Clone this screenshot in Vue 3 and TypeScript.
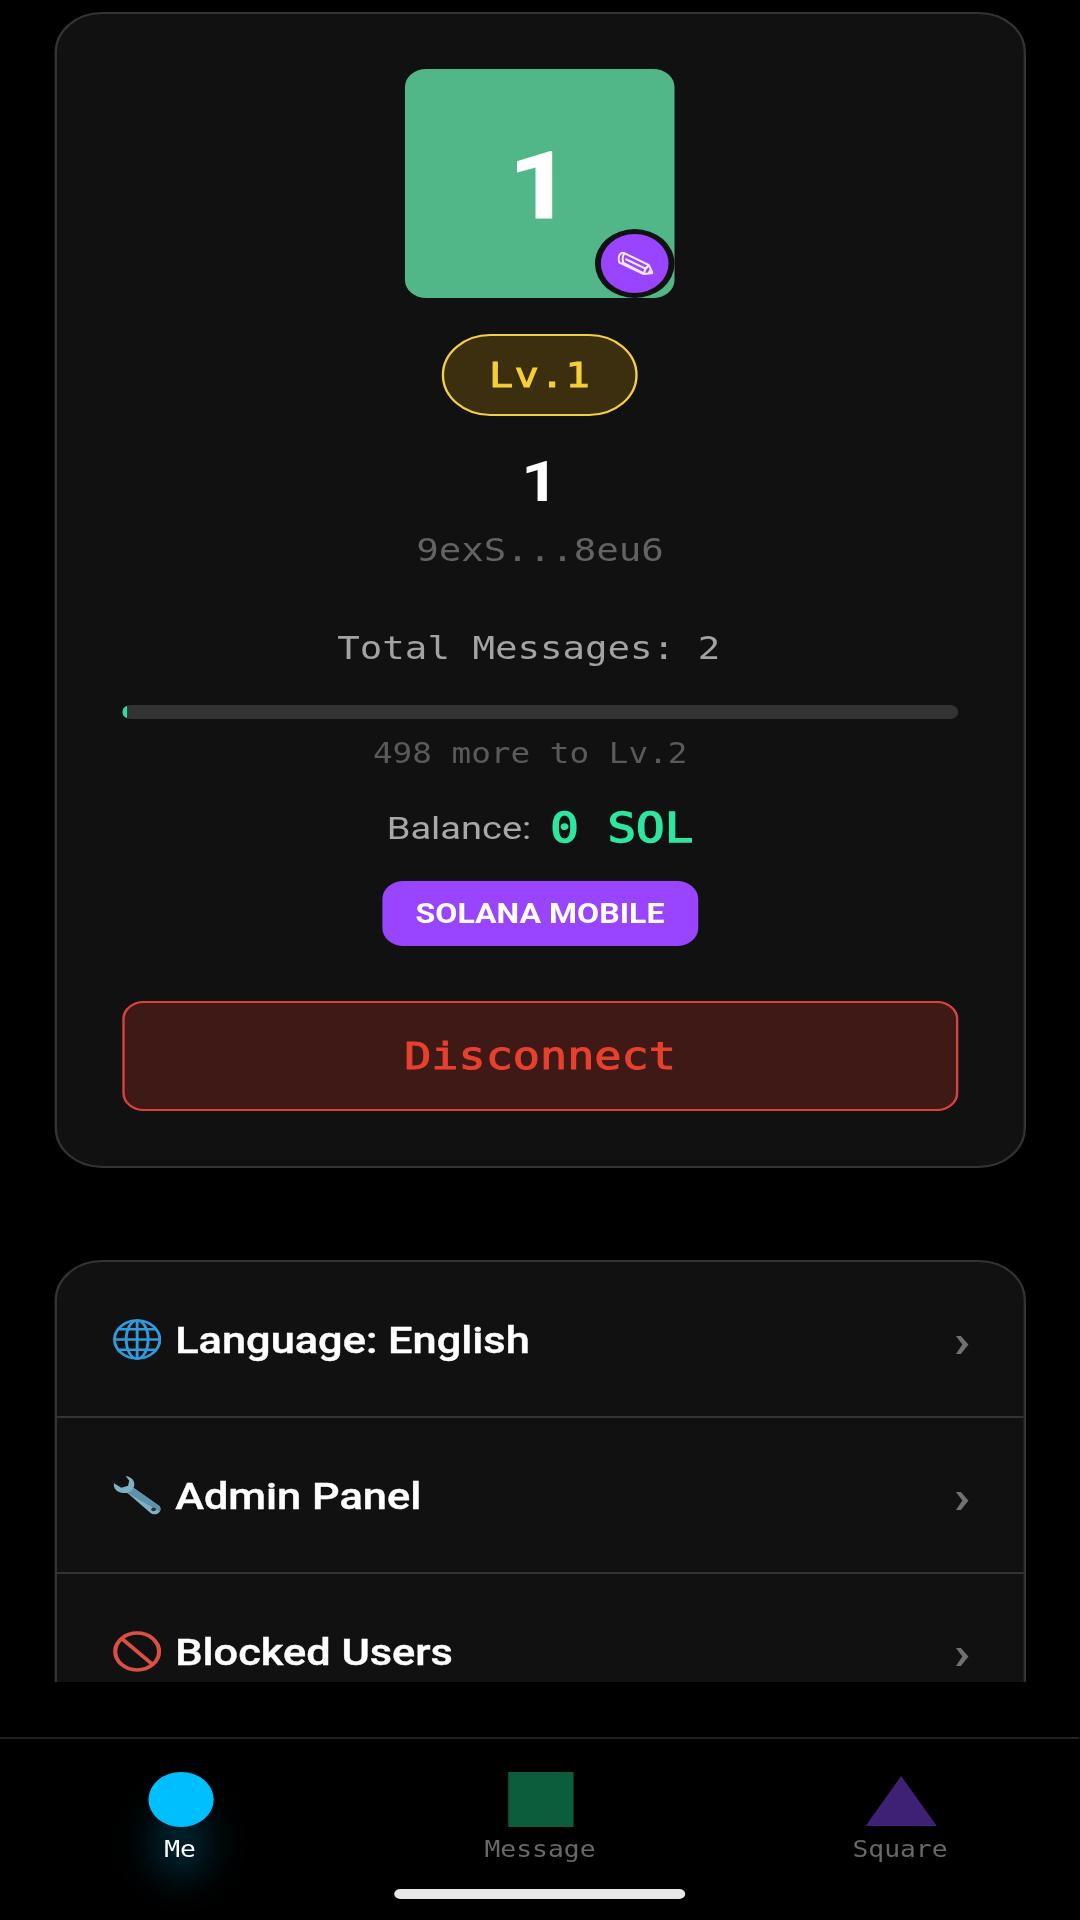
<script setup lang="ts">
interface MenuRow {
  label: string
  icon: 'globe' | 'wrench' | 'blocked'
}

interface Tab {
  label: string
  shape: 'circle' | 'square' | 'triangle'
  active?: boolean
}

const menuRows: MenuRow[] = [
  { label: 'Language: English', icon: 'globe' },
  { label: 'Admin Panel', icon: 'wrench' },
  { label: 'Blocked Users', icon: 'blocked' },
]

const tabs: Tab[] = [
  { label: 'Me', shape: 'circle', active: true },
  { label: 'Message', shape: 'square' },
  { label: 'Square', shape: 'triangle' },
]

const progress = 0.6
</script>

<template>
  <div class="screen">
    <main class="scroller">
      <section class="card profile">
        <div class="avatar">
          <span class="avatar-letter">1</span>
          <span class="edit-badge">
            <svg class="pencil" viewBox="0 0 36 23" preserveAspectRatio="none">
              <path d="M6.5 1 31.5 13 35.5 21 26.5 22 2 10.5C0.5 8 1 4 2.5 2.5 3.5 1 5 .5 6.5 1Z" fill="none" stroke="#f3e9ff" stroke-width="2" stroke-linejoin="round" />
              <path d="M7 1.5C5 4 4.5 7 6 11M8 7 28 16.5M6 11 26.5 21.5M31.5 13C29 15.5 27 18.5 26.5 22" fill="none" stroke="#f3e9ff" stroke-width="2" />
              <path d="M32 17.5 35.5 21 30.5 21.5Z" fill="#f3e9ff" />
            </svg>
          </span>
        </div>

        <div class="level-pill">Lv.1</div>
        <div class="name">1</div>
        <div class="address">9exS...8eu6</div>
        <div class="total">Total Messages: 2&nbsp;</div>

        <div class="progress-track">
          <div class="progress-fill" :style="{ width: `${progress}%` }"></div>
        </div>
        <div class="progress-note">498 more to Lv.2&nbsp;</div>

        <div class="balance">
          <span class="balance-label">Balance:</span>
          <span class="balance-value">0 SOL</span>
        </div>

        <div class="solana-chip">SOLANA MOBILE</div>
        <button class="disconnect" type="button">Disconnect</button>
      </section>

      <section class="card menu">
        <div v-for="row in menuRows" :key="row.label" class="menu-row">
          <svg v-if="row.icon === 'globe'" class="menu-icon" viewBox="0 0 40 40">
            <g fill="none" stroke="#2f9bdc" stroke-width="2.4">
              <circle cx="20" cy="20" r="18.6" />
              <ellipse cx="20" cy="20" rx="9" ry="18.6" />
              <path d="M20 1.4V38.6M1.4 20H38.6M4.5 10H35.5M4.5 30H35.5" />
            </g>
          </svg>
          <svg v-else-if="row.icon === 'wrench'" class="menu-icon" viewBox="0 0 40 40">
            <path d="M10.5 1C14 1.5 17 4 17.5 7.5 18 9.5 17.5 11 17 12.5L38 30C40 32 39.5 35.500 37.500 37 35.500 39 32.500 38.500 31 37L12 17.500C9 18 5.500 17.500 3 15 1 13 .5 10 1 8L7 12.500 12.500 10.500 13.500 5.500Z" fill="#7fb0c4" />
            <path d="M17 12.500 38 30C39 31.500 39.500 33.500 38.500 35.500L12 17.500C14.500 16.500 16 15 17 12.500Z" fill="#5d93aa" />
            <circle cx="33.500" cy="33.500" r="1.900" fill="#23343c" />
          </svg>
          <svg v-else class="menu-icon" viewBox="0 0 40 40">
            <circle cx="20" cy="20" r="18" fill="none" stroke="#dc4f43" stroke-width="3.400" />
            <path d="M7.300 7.300 32.700 32.700" stroke="#dc4f43" stroke-width="3.400" />
          </svg>
          <span class="menu-label">{{ row.label }}</span>
          <span class="chevron">›</span>
        </div>
      </section>
    </main>

    <nav class="tabbar">
      <div v-for="tab in tabs" :key="tab.label" class="tab" :class="{ active: tab.active }">
        <span class="tab-shape" :class="tab.shape"></span>
        <span class="tab-label">{{ tab.label }}</span>
      </div>
    </nav>
    <div class="home-bar-wrap"><div class="home-bar"></div></div>
  </div>
</template>

<style scoped>
.screen {
  /* the capture is a 1080x2280 phone squeezed to 1920 high, so everything is laid out narrow and widened */
  width: calc(1080px / 1.1875);
  height: 1920px;
  transform: scaleX(1.1875);
  transform-origin: left top;
  background: #000;
  color: #fff;
  overflow: hidden;
  display: flex;
  flex-direction: column;
  font-family: Roboto, "Noto Sans", sans-serif;
}

.scroller {
  height: 1682px;
  flex: none;
  overflow: hidden;
  padding: 12px 45.5px 0;
  box-sizing: border-box;
}

.card {
  background: #111;
  border: 2px solid #333;
  border-radius: 40px;
  box-sizing: border-box;
}

.profile {
  height: 1156px;
  padding: 55px 55px 0;
  display: flex;
  flex-direction: column;
  align-items: center;
}

.avatar {
  position: relative;
  width: 227px;
  height: 229px;
  flex: none;
  border-radius: 18px;
  background: #52b788;
  display: flex;
  align-items: center;
  justify-content: center;
}

.avatar-letter {
  font-size: 92px;
  font-weight: 700;
  line-height: 1;
  padding-top: 7px;
  -webkit-text-stroke: 1px #fff;
}

.edit-badge {
  position: absolute;
  right: 0;
  bottom: 0;
  width: 67px;
  height: 69px;
  box-sizing: border-box;
  border: 5.5px solid #111;
  border-radius: 50%;
  background: #9945ff;
  display: flex;
  align-items: center;
  justify-content: center;
}

.pencil {
  width: 30px;
  height: 23px;
}

.level-pill {
  margin-top: 36px;
  width: 165px;
  height: 82px;
  flex: none;
  box-sizing: border-box;
  border: 2.5px solid #f3cf45;
  border-radius: 41px;
  background: #3b2f10;
  color: #f5cf36;
  font-family: "DejaVu Sans Mono", "Liberation Mono", monospace;
  font-size: 34px;
  font-weight: 400;
  letter-spacing: 1px;
  -webkit-text-stroke: 1px #f5cf36;
  display: flex;
  align-items: center;
  justify-content: center;
}

.name {
  margin-top: 36px;
  font-size: 55px;
  font-weight: 700;
  line-height: 60px;
}

.address,
.total,
.progress-note {
  font-family: "DejaVu Sans Mono", "Liberation Mono", monospace;
}

.address {
  margin-top: 20px;
  font-size: 31.5px;
  line-height: 36px;
  color: #636363;
}

.total {
  margin-top: 62px;
  font-size: 31.5px;
  line-height: 36px;
  color: #a3a3a3;
}

.progress-track {
  margin-top: 39px;
  width: 100%;
  height: 14px;
  flex: none;
  border-radius: 7px;
  background: #333;
  overflow: hidden;
}

.progress-fill {
  height: 100%;
  background: #2ed8a0;
  border-radius: 7px;
}

.progress-note {
  margin-top: 17.5px;
  font-size: 27.5px;
  line-height: 32px;
  color: #5a5a5a;
}

.balance {
  margin-top: 34px;
  display: flex;
  align-items: center;
  gap: 16px;
  height: 50px;
}

.balance-label {
  font-size: 32px;
  color: #a8a8a8;
}

.balance-value {
  font-family: "DejaVu Sans Mono", "Liberation Mono", monospace;
  font-size: 40px;
  font-weight: 400;
  -webkit-text-stroke: 1.4px #2ee69e;
  color: #2ee69e;
}

.solana-chip {
  margin-top: 28px;
  width: 266px;
  height: 65px;
  padding-top: 2px;
  box-sizing: border-box;
  flex: none;
  border-radius: 18px;
  background: #9945ff;
  font-size: 27px;
  font-weight: 700;
  display: flex;
  align-items: center;
  justify-content: center;
}

.disconnect {
  margin-top: 55px;
  width: 100%;
  height: 110px;
  flex: none;
  box-sizing: border-box;
  border: 2.5px solid #d9443a;
  border-radius: 18px;
  background: #3f1916;
  color: #e8402f;
  font-family: "DejaVu Sans Mono", "Liberation Mono", monospace;
  font-size: 38px;
  font-weight: 400;
  -webkit-text-stroke: 1px #e8402f;
  padding: 0;
}

.menu {
  margin-top: 92px;
}

.menu-row {
  height: 156px;
  box-sizing: border-box;
  padding: 0 45px 0 47px;
  display: flex;
  align-items: center;
  border-bottom: 2px solid #333;
}

.menu-icon {
  width: 41px;
  height: 41px;
  flex: none;
  margin-right: 12px;
}

.menu-label {
  flex: 1;
  padding-top: 2px;
  font-size: 36.5px;
  font-weight: 500;
  -webkit-text-stroke: 0.4px #fff;
}

.chevron {
  font-size: 46px;
  font-weight: 700;
  line-height: 46px;
  color: #707070;
  margin-top: 4px;
}

.tabbar {
  margin-top: 55px;
  height: 131px;
  flex: none;
  border-top: 2px solid #222;
  box-sizing: border-box;
  display: grid;
  grid-template-columns: repeat(3, 1fr);
  padding-top: 33px;
}

.tab {
  position: relative;
  isolation: isolate;
  display: flex;
  flex-direction: column;
  align-items: center;
}

.tab-shape {
  width: 55px;
  height: 55px;
  flex: none;
  margin-left: 2px;
}

.tab-shape.circle {
  border-radius: 50%;
  background: #00bfff;
}

.tab-shape.square {
  background: #0b5d3b;
}

.tab-shape.triangle {
  width: 60px;
  height: 50px;
  margin-top: 4px;
  margin-bottom: 1px;
  background: #3e2175;
  clip-path: polygon(50% 0, 100% 100%, 0 100%);
}

.tab-label {
  margin-top: 9px;
  font-family: "DejaVu Sans Mono", "Liberation Mono", monospace;
  font-size: 22.2px;
  line-height: 26px;
  color: #686868;
}

.tab.active .tab-label {
  color: #fff;
}

.tab.active::after {
  content: '';
  position: absolute;
  left: 50%;
  top: 30px;
  width: 46px;
  height: 80px;
  margin-left: -23px;
  border-radius: 50%;
  background: rgba(0, 191, 255, 0.2);
  filter: blur(16px);
  z-index: -1;
}

.home-bar-wrap {
  flex: none;
  display: flex;
  justify-content: center;
  margin-top: 21px;
}

.home-bar {
  width: 245px;
  height: 10px;
  border-radius: 5px;
  background: #e8e8e8;
}
</style>

<style>
html,
body {
  margin: 0;
  background: #000;
}
</style>
